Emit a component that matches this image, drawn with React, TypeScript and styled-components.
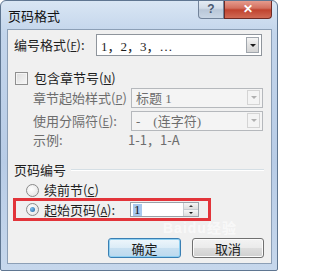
import React from "react";
import styled, { createGlobalStyle } from "styled-components";

const GlobalStyle = createGlobalStyle`
  html, body {
    margin: 0;
    padding: 0;
    background: #ffffff;
  }
  body {
    font-family: "Noto Sans CJK SC", "Liberation Sans", sans-serif;
    font-size: 13px;
    color: #1e1e1e;
  }
`;

const Window = styled.div`
  position: relative;
  width: 278px;
  height: 271px;
  box-sizing: border-box;
  border: 1px solid #5f7691;
  border-radius: 6px 6px 2px 2px;
  background: linear-gradient(180deg, #d9e6f4 0%, #c3d5eb 12%, #b8cce6 60%, #c6d7ec 100%);
  display: flex;
  flex-direction: column;
  overflow: hidden;
`;

const TitleBar = styled.div`
  height: 28px;
  display: flex;
  justify-content: space-between;
  align-items: flex-start;
  padding-left: 7px;
  padding-right: 5px;
`;

const TitleText = styled.div`
  font-size: 13px;
  line-height: 29px;
  color: #111;
`;

const Controls = styled.div`
  display: flex;
  margin-top: -1px;
`;

const CaptionButton = styled.div<{ $close?: boolean }>`
  width: ${(p) => (p.$close ? 48 : 26)}px;
  height: 19px;
  box-sizing: border-box;
  display: flex;
  align-items: center;
  justify-content: center;
  border: 1px solid ${(p) => (p.$close ? "#6e2a24" : "#72839a")};
  border-top: none;
  border-radius: ${(p) => (p.$close ? "0 0 4px 0" : "0 0 0 4px")};
  background: ${(p) =>
    p.$close
      ? "linear-gradient(180deg, #e8a194 0%, #d3705f 45%, #c0432f 55%, #d06a55 100%)"
      : "linear-gradient(180deg, #e6edf5 0%, #d2dce8 45%, #b9c7d8 55%, #c9d6e5 100%)"};
  color: ${(p) => (p.$close ? "#ffffff" : "#4a5870")};
  font-family: "Liberation Sans", sans-serif;
  font-weight: bold;
  font-size: 12px;
`;

const Client = styled.div`
  flex: 1;
  margin: 0 5px 6px 6px;
  border: 1px solid #8c9fb6;
  background: #f0f0f0;
  display: flex;
  flex-direction: column;
  padding: 0 7px 0 6px;
`;

const Row = styled.div<{ $h: number; $mt: number; $pl?: number }>`
  height: ${(p) => p.$h}px;
  margin-top: ${(p) => p.$mt}px;
  padding-left: ${(p) => p.$pl ?? 0}px;
  display: flex;
  align-items: center;
`;

const Label = styled.span<{ $w?: number; $disabled?: boolean }>`
  width: ${(p) => (p.$w ? `${p.$w}px` : "auto")};
  flex-shrink: 0;
  white-space: nowrap;
  color: ${(p) => (p.$disabled ? "#6d6d6d" : "#1e1e1e")};
  font-size: 13px;
  line-height: 16px;
`;

const Key = styled.span`
  text-decoration: underline;
  font-size: 11px;
`;

const Combo = styled.div<{ $w: number; $h: number; $disabled?: boolean }>`
  width: ${(p) => p.$w}px;
  height: ${(p) => p.$h}px;
  box-sizing: border-box;
  border: 1px solid ${(p) => (p.$disabled ? "#b5b8bc" : "#8f959c")};
  background: ${(p) => (p.$disabled ? "#f4f4f4" : "#ffffff")};
  display: flex;
  align-items: center;
  justify-content: space-between;
  padding: 0 2px 0 4px;
  color: ${(p) => (p.$disabled ? "#6d6d6d" : "#1e1e1e")};
  font-family: "Liberation Serif", "Noto Sans CJK SC", serif;
  font-size: 13px;
`;

const DropButton = styled.div<{ $disabled?: boolean }>`
  width: 13px;
  height: ${(p) => (p.$disabled ? 15 : 16)}px;
  box-sizing: border-box;
  border: 1px solid ${(p) => (p.$disabled ? "#d4d4d4" : "#a0a6ad")};
  background: ${(p) =>
    p.$disabled ? "#f4f4f4" : "linear-gradient(180deg, #f5f5f5 0%, #e2e2e2 50%, #d4d4d4 100%)"};
  display: flex;
  align-items: center;
  justify-content: center;
`;

const Arrow = styled.div<{ $disabled?: boolean; $up?: boolean; $size?: number }>`
  width: 0;
  height: 0;
  border-left: ${(p) => p.$size ?? 3.5}px solid transparent;
  border-right: ${(p) => p.$size ?? 3.5}px solid transparent;
  ${(p) =>
    p.$up
      ? `border-bottom: ${(p.$size ?? 3.5) - 0.5}px solid ${p.$disabled ? "#b0b0b0" : "#3c3c3c"};`
      : `border-top: ${(p.$size ?? 3.5) - 0.5}px solid ${p.$disabled ? "#b0b0b0" : "#1a1a1a"};`}
`;

const CheckBox = styled.div`
  width: 11px;
  height: 11px;
  border: 1px solid #8f8f8f;
  background: linear-gradient(135deg, #dcdcdc 0%, #f7f7f7 100%);
  box-shadow: inset 0 0 0 1px #f4f4f4;
  margin: 0 6px 0 1px;
`;

const Radio = styled.div<{ $checked?: boolean }>`
  width: 11px;
  height: 11px;
  border-radius: 50%;
  border: 1px solid #8a8a8a;
  background: radial-gradient(circle at 40% 40%, #ffffff 0%, #e0e0e0 100%);
  display: flex;
  align-items: center;
  justify-content: center;
  margin-right: 5px;
  &::after {
    content: "";
    display: ${(p) => (p.$checked ? "block" : "none")};
    width: 5px;
    height: 5px;
    border-radius: 50%;
    background: radial-gradient(circle at 35% 35%, #7fc0f0 0%, #1f5f9a 100%);
  }
`;

const GroupHeading = styled.div`
  display: flex;
  align-items: center;
  gap: 5px;
  width: 100%;
`;

const Divider = styled.div`
  flex: 1;
  height: 0;
  border-top: 1px solid #d5dfe5;
  border-bottom: 1px solid #ffffff;
`;

const Highlight = styled.div`
  margin-top: -1px;
  margin-left: -1px;
  width: 198px;
  height: 23px;
  box-sizing: border-box;
  border: 3px solid #e2343a;
  display: flex;
  align-items: center;
  padding-left: 10px;
`;

const Spin = styled.div`
  width: 69px;
  height: 15px;
  box-sizing: border-box;
  border: 1px solid #9ba1a8;
  background: #ffffff;
  display: flex;
  align-items: center;
  justify-content: space-between;
  margin-left: 2px;
`;

const Selected = styled.span`
  background: #a8c8ee;
  color: #1a1a1a;
  font-family: "Liberation Serif", serif;
  font-size: 13px;
  line-height: 12px;
  padding: 0 1px;
  margin-left: 2px;
`;

const SpinButtons = styled.div`
  width: 14px;
  height: 13px;
  display: flex;
  flex-direction: column;
  border-left: 1px solid #c8cdd2;
`;

const SpinHalf = styled.div`
  flex: 1;
  display: flex;
  align-items: center;
  justify-content: center;
  background: linear-gradient(180deg, #f6f6f6 0%, #dedede 100%);
  border-bottom: 1px solid #c8cdd2;
  &:last-child {
    border-bottom: none;
  }
`;

const ButtonRow = styled.div`
  margin-top: 17px;
  display: flex;
  justify-content: flex-end;
  gap: 11px;
`;

const Button = styled.div<{ $default?: boolean }>`
  width: ${(p) => (p.$default ? 73 : 72)}px;
  height: 20px;
  box-sizing: border-box;
  border: 1px solid ${(p) => (p.$default ? "#3a7fb3" : "#707070")};
  border-radius: 3px;
  background: ${(p) =>
    p.$default
      ? "linear-gradient(180deg, #eef6fb 0%, #dcecf7 48%, #c8e0f1 52%, #bcd9ee 100%)"
      : "linear-gradient(180deg, #f3f3f3 0%, #ebebeb 48%, #dddddd 52%, #cfcfcf 100%)"};
  box-shadow: ${(p) => (p.$default ? "inset 0 0 0 1px #8fd0f2" : "inset 0 0 0 1px #fbfbfb")};
  display: flex;
  align-items: center;
  justify-content: center;
  font-size: 13px;
  color: #1a1a1a;
`;

const Watermark = styled.div`
  position: absolute;
  left: 162px;
  top: 220px;
  font-family: "Liberation Sans", "Noto Sans CJK SC", sans-serif;
  font-size: 14px;
  line-height: 15px;
  font-weight: bold;
  color: rgba(255, 255, 255, 0.6);
  letter-spacing: 1px;
  pointer-events: none;
  white-space: nowrap;
`;

function App(): JSX.Element {
  return (
    <>
      <GlobalStyle />
      <Window>
        <TitleBar>
          <TitleText>页码格式</TitleText>
          <Controls>
            <CaptionButton>?</CaptionButton>
            <CaptionButton $close>✕</CaptionButton>
          </Controls>
        </TitleBar>
        <Client>
          <Row $h={22} $mt={4}>
            <Label $w={82}>
              编号格式(<Key>F</Key>):
            </Label>
            <Combo $w={166} $h={22}>
              <span>1，2，3，…</span>
              <DropButton>
                <Arrow />
              </DropButton>
            </Combo>
          </Row>
          <Row $h={18} $mt={13}>
            <CheckBox />
            <Label>
              包含章节号(<Key>N</Key>)
            </Label>
          </Row>
          <Row $h={21} $mt={0} $pl={19}>
            <Label $w={98} $disabled>
              章节起始样式(<Key>P</Key>)
            </Label>
            <Combo $w={132} $h={20} $disabled>
              <span>标题 1</span>
              <DropButton $disabled>
                <Arrow $disabled />
              </DropButton>
            </Combo>
          </Row>
          <Row $h={21} $mt={2} $pl={19}>
            <Label $w={98} $disabled>
              使用分隔符(<Key>E</Key>):
            </Label>
            <Combo $w={132} $h={20} $disabled>
              <span>-&nbsp;&nbsp;&nbsp;&nbsp;(连字符)</span>
              <DropButton $disabled>
                <Arrow $disabled />
              </DropButton>
            </Combo>
          </Row>
          <Row $h={18} $mt={0} $pl={19}>
            <Label $w={95} $disabled>
              示例:
            </Label>
            <Label $disabled>1-1，1-A</Label>
          </Row>
          <Row $h={18} $mt={12} $pl={-1}>
            <GroupHeading>
              <Label>页码编号</Label>
              <Divider />
            </GroupHeading>
          </Row>
          <Row $h={18} $mt={2} $pl={12}>
            <Radio />
            <Label>
              续前节(<Key>C</Key>)
            </Label>
          </Row>
          <Highlight>
            <Radio $checked />
            <Label $w={84}>
              起始页码(<Key>A</Key>):
            </Label>
            <Spin>
              <Selected>1</Selected>
              <SpinButtons>
                <SpinHalf>
                  <Arrow $up $size={2.5} />
                </SpinHalf>
                <SpinHalf>
                  <Arrow $size={2.5} />
                </SpinHalf>
              </SpinButtons>
            </Spin>
          </Highlight>
          <ButtonRow>
            <Button $default>确定</Button>
            <Button>取消</Button>
          </ButtonRow>
        </Client>
        <Watermark>Baidu经验</Watermark>
      </Window>
    </>
  );
}

export default App;
